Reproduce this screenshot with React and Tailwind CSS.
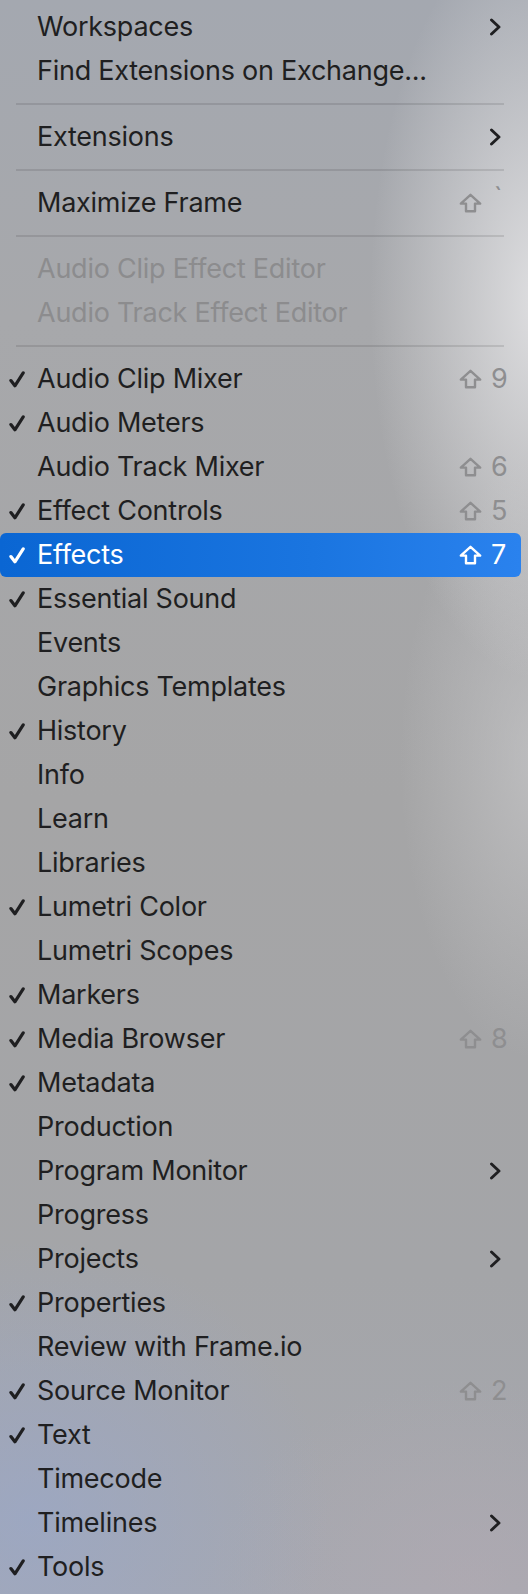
import React from 'react';

const items = [
  { label: 'Workspaces', sub: true },
  { label: 'Find Extensions on Exchange...' },
  'sep',
  { label: 'Extensions', sub: true },
  'sep',
  { label: 'Maximize Frame', shortcut: '`' },
  'sep',
  { label: 'Audio Clip Effect Editor', disabled: true },
  { label: 'Audio Track Effect Editor', disabled: true },
  'sep',
  { label: 'Audio Clip Mixer', checked: true, shortcut: '9' },
  { label: 'Audio Meters', checked: true },
  { label: 'Audio Track Mixer', shortcut: '6' },
  { label: 'Effect Controls', checked: true, shortcut: '5' },
  { label: 'Effects', checked: true, shortcut: '7', active: true },
  { label: 'Essential Sound', checked: true },
  { label: 'Events' },
  { label: 'Graphics Templates' },
  { label: 'History', checked: true },
  { label: 'Info' },
  { label: 'Learn' },
  { label: 'Libraries' },
  { label: 'Lumetri Color', checked: true },
  { label: 'Lumetri Scopes' },
  { label: 'Markers', checked: true },
  { label: 'Media Browser', checked: true, shortcut: '8' },
  { label: 'Metadata', checked: true },
  { label: 'Production' },
  { label: 'Program Monitor', sub: true },
  { label: 'Progress' },
  { label: 'Projects', sub: true },
  { label: 'Properties', checked: true },
  { label: 'Review with Frame.io' },
  { label: 'Source Monitor', checked: true, shortcut: '2' },
  { label: 'Text', checked: true },
  { label: 'Timecode' },
  { label: 'Timelines', sub: true },
  { label: 'Tools', checked: true },
];

function Check() {
  return (
    <svg width="16" height="17" viewBox="0 0 16 17" fill="none">
      <path d="M1.9 9.6 L5.9 14.8 L14.2 1.9" stroke="currentColor" strokeWidth="3.2" strokeLinecap="round" strokeLinejoin="round" />
    </svg>
  );
}

function Chevron() {
  return (
    <svg width="13" height="18" viewBox="0 0 13 18" fill="none">
      <path d="M2.5 2 L10 9 L2.5 16" stroke="currentColor" strokeWidth="2.9" strokeLinecap="round" strokeLinejoin="round" />
    </svg>
  );
}

function ShiftKey() {
  return (
    <svg width="23" height="20" viewBox="0 0 23 20" fill="none">
      <path d="M11.5 1.8 L21.2 10.6 H16 V18.2 H7 V10.6 H1.8 Z" stroke="currentColor" strokeWidth="2.4" strokeLinejoin="round" />
    </svg>
  );
}

function MenuRow({ item }) {
  const { label, checked, sub, shortcut, disabled, active } = item;
  const textColor = active ? 'text-white' : disabled ? 'text-[#8c8c8e]' : 'text-[#1f1f21]';

  return (
    <div
      className={`flex h-[44px] items-center mr-[7px] rounded-[6px] ${textColor} ${
        active ? 'bg-[linear-gradient(90deg,#0a66d3,#1a75e0_60%,#2a82ee)]' : ''
      }`}
    >
      <div className="w-[37px] shrink-0 flex justify-end pr-[12px]">{checked && <Check />}</div>
      <div className="flex-1 whitespace-nowrap">{label}</div>
      {sub && (
        <div className="pr-[19px] flex items-center">
          <Chevron />
        </div>
      )}
      {shortcut && (
        <div className={`flex items-center gap-[9px] pr-[16px] ${active ? 'text-white' : 'text-[#8e8e90]'}`}>
          <ShiftKey />
          <span className={`w-[14px] text-center ${shortcut === '`' ? '-mt-[10px]' : ''}`}>{shortcut}</span>
        </div>
      )}
    </div>
  );
}

export default function App() {
  return (
    <div
      className="w-[528px] h-[1594px] overflow-hidden pt-[5px] text-[27px] leading-[34px] tracking-[-0.25px] bg-[radial-gradient(ellipse_170px_380px_at_540px_300px,rgba(228,228,230,0.9),transparent),radial-gradient(ellipse_140px_300px_at_540px_760px,rgba(205,205,207,0.6),transparent),radial-gradient(ellipse_300px_280px_at_30px_1520px,rgba(152,167,203,0.65),transparent),radial-gradient(ellipse_260px_200px_at_470px_1580px,rgba(178,170,178,0.6),transparent),linear-gradient(180deg,#a4a8b0_0%,#a7a8ab_20%,#a5a5a6_50%,#a4a5a8_80%,#a6a8b0_100%)]"
      style={{ fontFamily: 'Inter, "Noto Sans", sans-serif' }}
    >
      {items.map((item, i) =>
        item === 'sep' ? (
          <div key={i} className="h-[22px] flex items-center px-[16px] pr-[24px]">
            <div className="h-[2px] w-full bg-black/10" />
          </div>
        ) : (
          <MenuRow key={i} item={item} />
        )
      )}
    </div>
  );
}
